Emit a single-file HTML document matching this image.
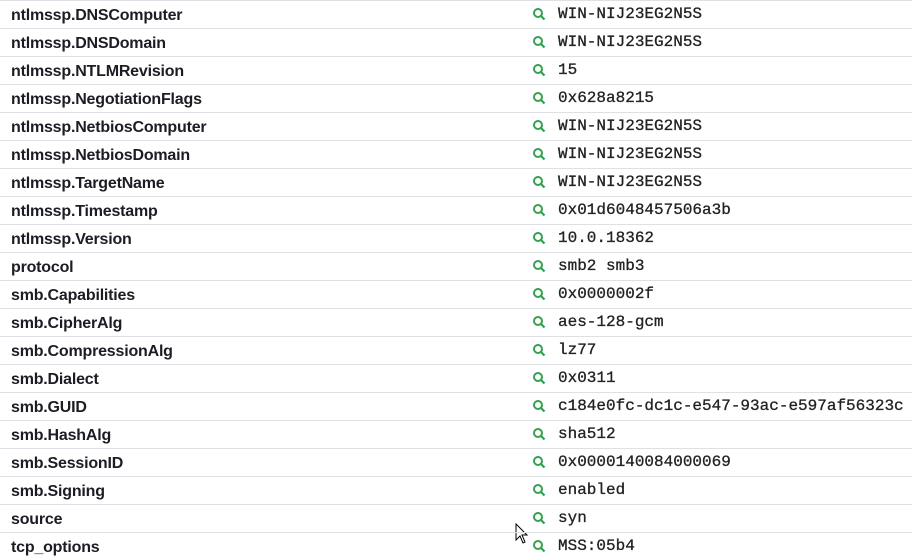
<!DOCTYPE html>
<html><head><style>
html,body{margin:0;padding:0;background:#fff;width:912px;height:558px;overflow:hidden}
.r{position:relative;height:27px;border-top:1px solid #dfe0e6}
.k{position:absolute;left:11px;top:6px;font:bold 16px "Liberation Sans",sans-serif;color:#1c1c24;letter-spacing:-0.2px}
.v{position:absolute;left:558px;top:4px;font:16px "Liberation Mono",monospace;color:#222;-webkit-text-stroke:0.3px #222}
.i{position:absolute;left:532px;top:6px;width:14px;height:14px}
</style></head><body>
<div class="r"><span class="k">ntlmssp.DNSComputer</span><svg class="i" viewBox="0 0 14 14"><circle cx="6" cy="6" r="4" fill="none" stroke="#35a04f" stroke-width="2"/><path d="M9 9l3.5 3.5" stroke="#35a04f" stroke-width="2.2"/></svg><span class="v">WIN-NIJ23EG2N5S</span></div>
<div class="r"><span class="k">ntlmssp.DNSDomain</span><svg class="i" viewBox="0 0 14 14"><circle cx="6" cy="6" r="4" fill="none" stroke="#35a04f" stroke-width="2"/><path d="M9 9l3.5 3.5" stroke="#35a04f" stroke-width="2.2"/></svg><span class="v">WIN-NIJ23EG2N5S</span></div>
<div class="r"><span class="k">ntlmssp.NTLMRevision</span><svg class="i" viewBox="0 0 14 14"><circle cx="6" cy="6" r="4" fill="none" stroke="#35a04f" stroke-width="2"/><path d="M9 9l3.5 3.5" stroke="#35a04f" stroke-width="2.2"/></svg><span class="v">15</span></div>
<div class="r"><span class="k">ntlmssp.NegotiationFlags</span><svg class="i" viewBox="0 0 14 14"><circle cx="6" cy="6" r="4" fill="none" stroke="#35a04f" stroke-width="2"/><path d="M9 9l3.5 3.5" stroke="#35a04f" stroke-width="2.2"/></svg><span class="v">0x628a8215</span></div>
<div class="r"><span class="k">ntlmssp.NetbiosComputer</span><svg class="i" viewBox="0 0 14 14"><circle cx="6" cy="6" r="4" fill="none" stroke="#35a04f" stroke-width="2"/><path d="M9 9l3.5 3.5" stroke="#35a04f" stroke-width="2.2"/></svg><span class="v">WIN-NIJ23EG2N5S</span></div>
<div class="r"><span class="k">ntlmssp.NetbiosDomain</span><svg class="i" viewBox="0 0 14 14"><circle cx="6" cy="6" r="4" fill="none" stroke="#35a04f" stroke-width="2"/><path d="M9 9l3.5 3.5" stroke="#35a04f" stroke-width="2.2"/></svg><span class="v">WIN-NIJ23EG2N5S</span></div>
<div class="r"><span class="k">ntlmssp.TargetName</span><svg class="i" viewBox="0 0 14 14"><circle cx="6" cy="6" r="4" fill="none" stroke="#35a04f" stroke-width="2"/><path d="M9 9l3.5 3.5" stroke="#35a04f" stroke-width="2.2"/></svg><span class="v">WIN-NIJ23EG2N5S</span></div>
<div class="r"><span class="k">ntlmssp.Timestamp</span><svg class="i" viewBox="0 0 14 14"><circle cx="6" cy="6" r="4" fill="none" stroke="#35a04f" stroke-width="2"/><path d="M9 9l3.5 3.5" stroke="#35a04f" stroke-width="2.2"/></svg><span class="v">0x01d6048457506a3b</span></div>
<div class="r"><span class="k">ntlmssp.Version</span><svg class="i" viewBox="0 0 14 14"><circle cx="6" cy="6" r="4" fill="none" stroke="#35a04f" stroke-width="2"/><path d="M9 9l3.5 3.5" stroke="#35a04f" stroke-width="2.2"/></svg><span class="v">10.0.18362</span></div>
<div class="r"><span class="k">protocol</span><svg class="i" viewBox="0 0 14 14"><circle cx="6" cy="6" r="4" fill="none" stroke="#35a04f" stroke-width="2"/><path d="M9 9l3.5 3.5" stroke="#35a04f" stroke-width="2.2"/></svg><span class="v">smb2 smb3</span></div>
<div class="r"><span class="k">smb.Capabilities</span><svg class="i" viewBox="0 0 14 14"><circle cx="6" cy="6" r="4" fill="none" stroke="#35a04f" stroke-width="2"/><path d="M9 9l3.5 3.5" stroke="#35a04f" stroke-width="2.2"/></svg><span class="v">0x0000002f</span></div>
<div class="r"><span class="k">smb.CipherAlg</span><svg class="i" viewBox="0 0 14 14"><circle cx="6" cy="6" r="4" fill="none" stroke="#35a04f" stroke-width="2"/><path d="M9 9l3.5 3.5" stroke="#35a04f" stroke-width="2.2"/></svg><span class="v">aes-128-gcm</span></div>
<div class="r"><span class="k">smb.CompressionAlg</span><svg class="i" viewBox="0 0 14 14"><circle cx="6" cy="6" r="4" fill="none" stroke="#35a04f" stroke-width="2"/><path d="M9 9l3.5 3.5" stroke="#35a04f" stroke-width="2.2"/></svg><span class="v">lz77</span></div>
<div class="r"><span class="k">smb.Dialect</span><svg class="i" viewBox="0 0 14 14"><circle cx="6" cy="6" r="4" fill="none" stroke="#35a04f" stroke-width="2"/><path d="M9 9l3.5 3.5" stroke="#35a04f" stroke-width="2.2"/></svg><span class="v">0x0311</span></div>
<div class="r"><span class="k">smb.GUID</span><svg class="i" viewBox="0 0 14 14"><circle cx="6" cy="6" r="4" fill="none" stroke="#35a04f" stroke-width="2"/><path d="M9 9l3.5 3.5" stroke="#35a04f" stroke-width="2.2"/></svg><span class="v">c184e0fc-dc1c-e547-93ac-e597af56323c</span></div>
<div class="r"><span class="k">smb.HashAlg</span><svg class="i" viewBox="0 0 14 14"><circle cx="6" cy="6" r="4" fill="none" stroke="#35a04f" stroke-width="2"/><path d="M9 9l3.5 3.5" stroke="#35a04f" stroke-width="2.2"/></svg><span class="v">sha512</span></div>
<div class="r"><span class="k">smb.SessionID</span><svg class="i" viewBox="0 0 14 14"><circle cx="6" cy="6" r="4" fill="none" stroke="#35a04f" stroke-width="2"/><path d="M9 9l3.5 3.5" stroke="#35a04f" stroke-width="2.2"/></svg><span class="v">0x0000140084000069</span></div>
<div class="r"><span class="k">smb.Signing</span><svg class="i" viewBox="0 0 14 14"><circle cx="6" cy="6" r="4" fill="none" stroke="#35a04f" stroke-width="2"/><path d="M9 9l3.5 3.5" stroke="#35a04f" stroke-width="2.2"/></svg><span class="v">enabled</span></div>
<div class="r"><span class="k">source</span><svg class="i" viewBox="0 0 14 14"><circle cx="6" cy="6" r="4" fill="none" stroke="#35a04f" stroke-width="2"/><path d="M9 9l3.5 3.5" stroke="#35a04f" stroke-width="2.2"/></svg><span class="v">syn</span>
<svg style="position:absolute;left:515px;top:18px" width="14" height="22" viewBox="0 0 14 22"><path d="M1 1v16l4-4 3 7 2-1-3-7h5z" fill="#fff" stroke="#000" stroke-width="1"/></svg></div>
<div class="r"><span class="k">tcp_options</span><svg class="i" viewBox="0 0 14 14"><circle cx="6" cy="6" r="4" fill="none" stroke="#35a04f" stroke-width="2"/><path d="M9 9l3.5 3.5" stroke="#35a04f" stroke-width="2.2"/></svg><span class="v">MSS:05b4</span></div>
</body></html>
